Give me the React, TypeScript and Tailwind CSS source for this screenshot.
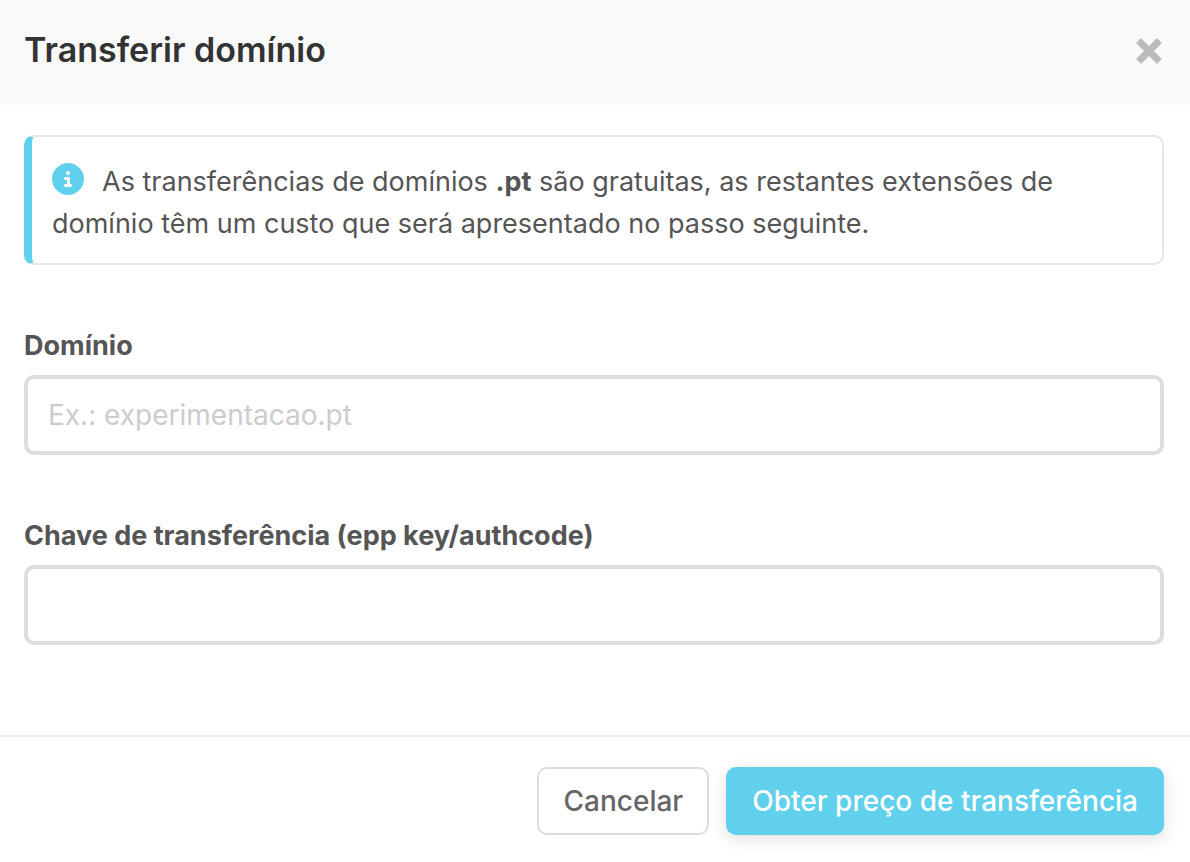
import { FaCircleInfo } from "react-icons/fa6";

export default function App() {
    return (
        <main className="bg-white font-['Inter',sans-serif] text-[28px] text-[#555555]">
            <header className="flex h-[105px] items-center justify-between bg-[#f9f9f9] px-6 pb-1">
                <h1 className="pb-0.5 text-[34px] font-semibold text-[#333333]">Transferir domínio</h1>
                <button type="button" aria-label="Fechar" className="p-1 text-[#bbbbbb]">
                    <CloseIcon />
                </button>
            </header>

            <form>
                <div className="pt-[30px] pr-[26px] pb-[90px] pl-6">
                    <div className="rounded-[10px] border-2 border-l-8 border-[#e5e5e5] border-l-[#60d0ec] px-5 pt-6 pb-[18px] text-[27px] leading-[42px]">
                        <FaCircleInfo size={32} className="mr-[18px] inline-block align-[-4px] text-[#60d0ec]" />
                        As transferências de domínios <strong className="font-bold">.pt</strong> são gratuitas, as
                        restantes extensões de domínio têm um custo que será apresentado no passo seguinte.
                    </div>

                    <label htmlFor="domain" className="mt-[60px] block text-[27px] leading-[42px] font-bold">
                        Domínio
                    </label>
                    <input
                        id="domain"
                        type="text"
                        placeholder="Ex.: experimentacao.pt"
                        className="mt-2 block h-20 w-full rounded-[10px] border-4 border-[#dddddd] px-5 placeholder:text-[#cccccc]"
                    />

                    <label htmlFor="authcode" className="mt-[60px] block text-[27px] leading-[42px] font-bold">
                        Chave de transferência (epp key/authcode)
                    </label>
                    <input
                        id="authcode"
                        type="text"
                        className="mt-2 block h-20 w-full rounded-[10px] border-4 border-[#dddddd] px-5"
                    />
                </div>

                <footer className="flex justify-end gap-[17px] border-t-2 border-[#eeeeee] pt-[30px] pr-[26px] pb-[27px] font-medium">
                    <button
                        type="button"
                        className="h-[68px] min-w-[172px] rounded-[10px] border-2 border-[#dddddd] px-6 text-[#666666]"
                    >
                        Cancelar
                    </button>
                    <button
                        type="submit"
                        className="h-[68px] rounded-[10px] bg-[#60d0ec] px-[26px] text-white shadow-[0_4px_16px_rgba(40,40,70,0.15)]"
                    >
                        Obter preço de transferência
                    </button>
                </footer>
            </form>
        </main>
    );
}

function CloseIcon() {
    return (
        <svg width="26" height="26" viewBox="0 0 26 26" fill="currentColor" stroke="currentColor" strokeLinejoin="round">
            <path d="M5 1 13 9l8-8 4 4-8 8 8 8-4 4-8-8-8 8-4-4 8-8-8-8z" strokeWidth="1.4" />
        </svg>
    );
}
